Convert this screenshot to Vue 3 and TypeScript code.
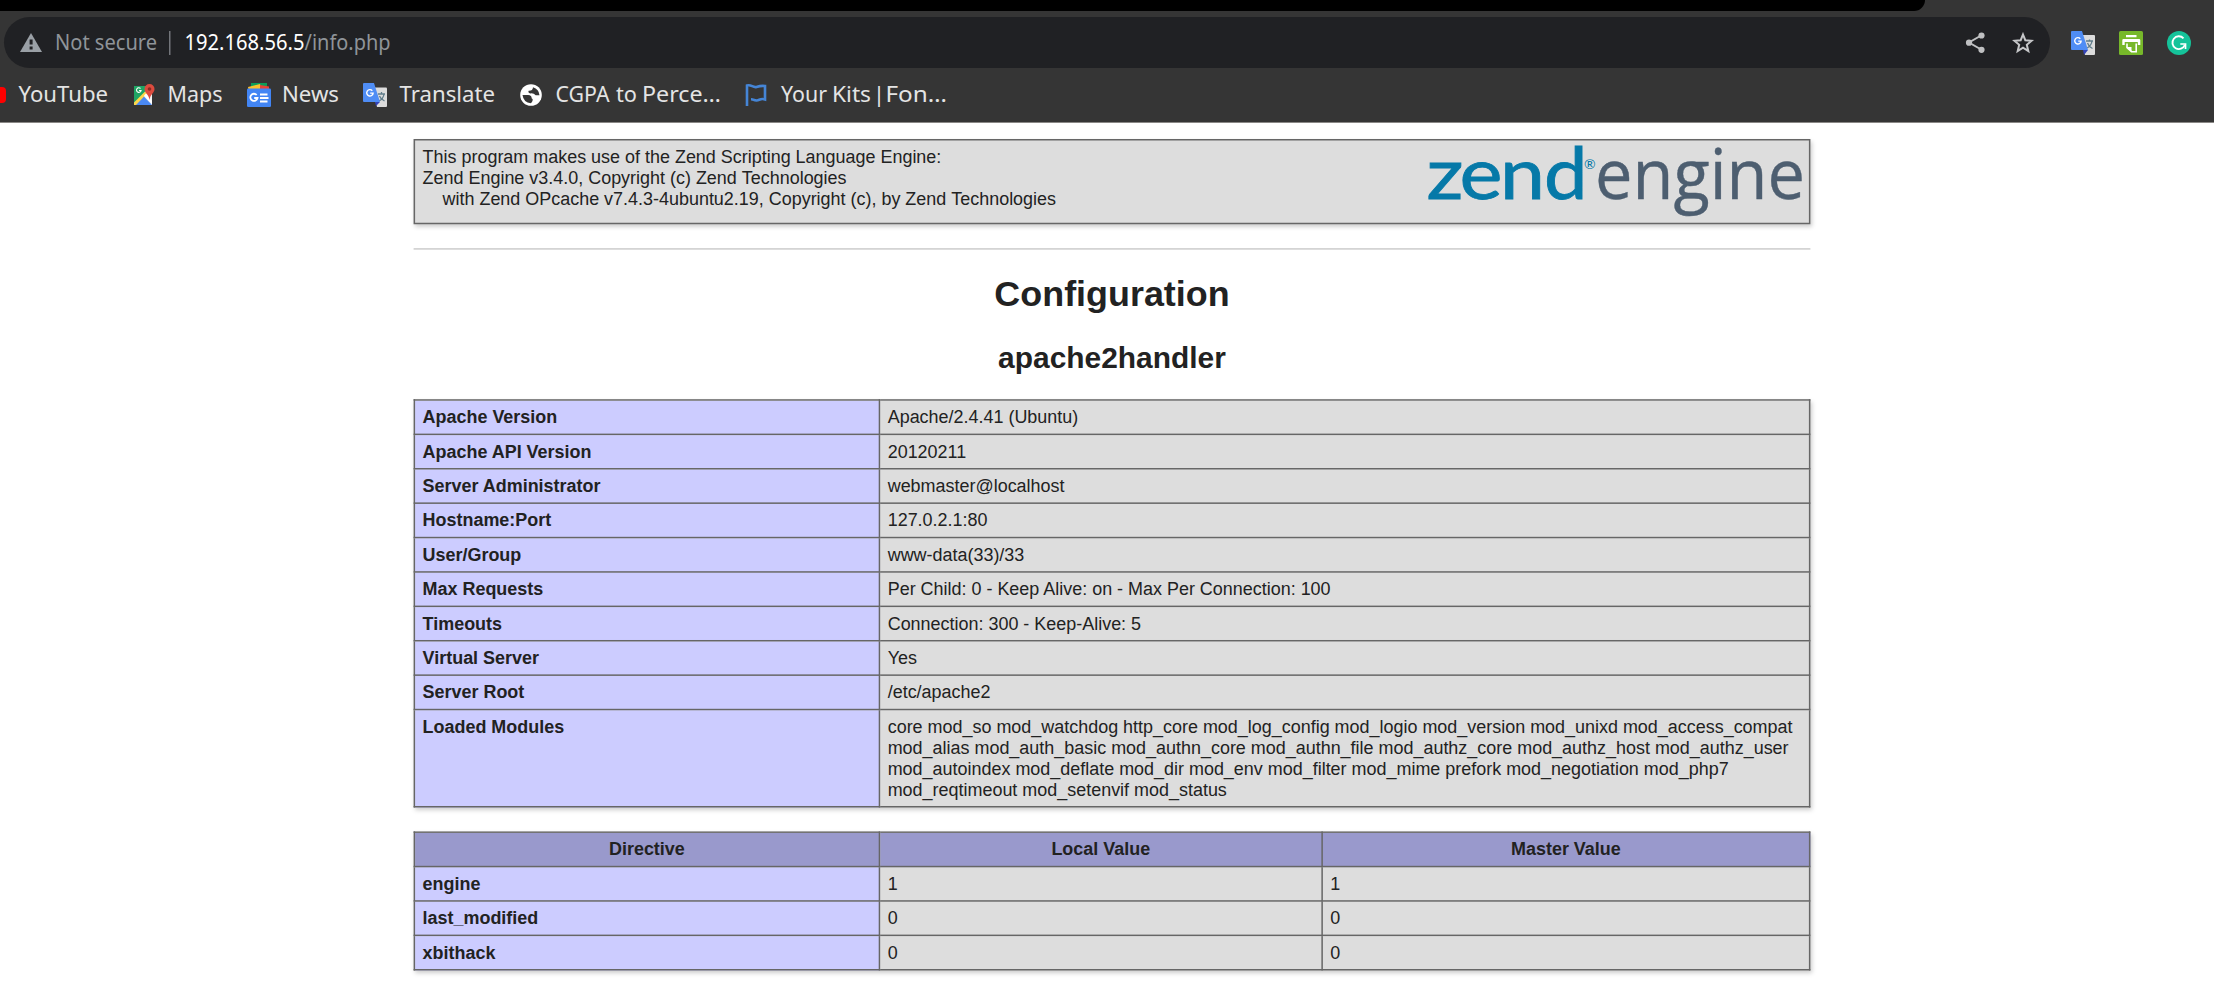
<script setup lang="ts">
interface Word { t: string; x: number; w: number }
interface Bookmark { icon: string; width: number; words: Word[] }

const bookmarks: Bookmark[] = [
  { icon: 'youtube', width: 89.5, words: [{ t: 'YouTube', x: -0.5, w: 89.5 }] },
  { icon: 'maps', width: 54, words: [{ t: 'Maps', x: -1.5, w: 55 }] },
  { icon: 'news', width: 56, words: [{ t: 'News', x: -1, w: 57 }] },
  { icon: 'translate', width: 95.5, words: [{ t: 'Translate', x: -0.5, w: 95.5 }] },
  { icon: 'globe', width: 164, words: [{ t: 'CGPA', x: -0.5, w: 54 }, { t: 'to', x: 60, w: 21 }, { t: 'Perce…', x: 86, w: 79 }] },
  { icon: 'flag', width: 166, words: [{ t: 'Your', x: 1, w: 46 }, { t: 'Kits', x: 52, w: 39 }, { t: '|', x: 93, w: 12 }, { t: 'Fon…', x: 105.5, w: 61.5 }] },
]

const rows: [string, string][] = [
  ['Apache Version', 'Apache/2.4.41 (Ubuntu)'],
  ['Apache API Version', '20120211'],
  ['Server Administrator', 'webmaster@localhost'],
  ['Hostname:Port', '127.0.2.1:80'],
  ['User/Group', 'www-data(33)/33'],
  ['Max Requests', 'Per Child: 0 - Keep Alive: on - Max Per Connection: 100'],
  ['Timeouts', 'Connection: 300 - Keep-Alive: 5'],
  ['Virtual Server', 'Yes'],
  ['Server Root', '/etc/apache2'],
  ['Loaded Modules', 'core mod_so mod_watchdog http_core mod_log_config mod_logio mod_version mod_unixd mod_access_compat mod_alias mod_auth_basic mod_authn_core mod_authn_file mod_authz_core mod_authz_host mod_authz_user mod_autoindex mod_deflate mod_dir mod_env mod_filter mod_mime prefork mod_negotiation mod_php7 mod_reqtimeout mod_setenvif mod_status'],
]

const directives: [string, string, string][] = [
  ['engine', '1', '1'],
  ['last_modified', '0', '0'],
  ['xbithack', '0', '0'],
]
</script>

<template>
  <div class="screen">
    <header class="chrome">
      <div class="tabstrip"></div>
      <div class="toolbar">
        <div class="omnibox">
          <svg class="warn" width="24" height="22" viewBox="0 0 24 22">
            <path d="M12 1 23 20H1Z" fill="#9aa0a6" />
            <path d="M10.600 7.500h3v5h-3zM10.600 14.500h3v3h-3z" fill="#202124" />
          </svg>
          <svg class="address" width="350" height="32">
            <text class="muted" x="-1" y="23" textLength="102" lengthAdjust="spacingAndGlyphs">Not secure</text>
            <rect x="113" y="4" width="1.500" height="24" fill="#72757a" />
            <text class="host" x="128.500" y="23" textLength="120" lengthAdjust="spacingAndGlyphs">192.168.56.5</text>
            <text class="muted" x="248.500" y="23" textLength="86" lengthAdjust="spacingAndGlyphs">/info.php</text>
          </svg>
          <svg class="share" width="22" height="24" viewBox="0 0 22 24">
            <path d="M17 4 4 11.500 17 19" fill="none" stroke="#bfc0c2" stroke-width="2" />
            <circle cx="16.500" cy="4.500" r="3.100" fill="#bfc0c2" /><circle cx="4" cy="11.700" r="3.100" fill="#bfc0c2" /><circle cx="16.500" cy="18.800" r="3.100" fill="#bfc0c2" />
          </svg>
          <svg class="star" width="22" height="22" viewBox="0 0 22 22">
            <path d="m11 2.500 2.300 5.700 6.300.5-4.800 4.100 1.500 6.200L11 15.600 5.700 19l1.500-6.200-4.800-4.100 6.300-.5Z" fill="none" stroke="#c6c7c9" stroke-width="2" />
          </svg>
        </div>
        <svg class="ext" width="24" height="24" viewBox="0 0 24 24">
          <path d="M9 4h14a1 1 0 0 1 1 1v18a1 1 0 0 1-1 1h-9Z" fill="#dcdcdc" />
          <path d="M15 10h7M18.500 8.500V10M21 10c-.5 4-3 6-5 7M16.500 12c1 3 3 4.500 5 5.500" fill="none" stroke="#607d8b" stroke-width="1.300" />
          <path d="M12 19h5l-4 5Z" fill="#3444b8" />
          <path d="M1 0h10l6 19H1a1 1 0 0 1-1-1V1a1 1 0 0 1 1-1Z" fill="#4f8df5" />
          <path d="M9.300 7.700a3.200 3.200 0 1 0 .8 2.400H7.200" fill="none" stroke="#fff" stroke-width="1.400" />
        </svg>
        <svg class="ext" width="24" height="24" viewBox="0 0 24 24">
          <rect width="24" height="24" rx="1.500" fill="#77b82a" />
          <path d="M7 4h10.500v2.200H7zM4.500 8h15.500q1.300 0 1.300 1.300V14h-2.500v-3H5.700v3H3.300V9.300Q3.300 8 4.500 8Z" fill="#fff" />
          <path d="M8 12.500v4.200l4.500 4h4.700v-8.200" fill="none" stroke="#fff" stroke-width="1.600" />
          <path d="M7.500 16h5v4.700Z" fill="#fff" />
        </svg>
        <svg class="ext" width="24" height="24" viewBox="0 0 24 24">
          <circle cx="12" cy="12" r="12" fill="#15c39a" />
          <path d="M16.500 7.300A6.400 6.400 0 1 0 17.800 14" fill="none" stroke="#fff" stroke-width="1.900" />
          <path d="M13.300 13h5.200v5" fill="none" stroke="#fff" stroke-width="1.700" />
        </svg>
      </div>
      <nav class="bookmarks">
        <div v-for="b in bookmarks" :key="b.icon" class="bookmark">
          <svg v-if="b.icon === 'youtube'" width="6" height="24" viewBox="0 0 6 24"><rect x="-20" y="4" width="26" height="16" rx="4" fill="#f00" /></svg>
          <svg v-else-if="b.icon === 'maps'" width="24" height="24" viewBox="0 0 24 24">
            <path d="M2 3h18v19H2Z" fill="#f1f1f1" />
            <path d="M2 3h14L12 12 2 20Z" fill="#1fa463" />
            <path d="M2 22 11 12.500 20 22Z" fill="#4a89f3" />
            <path d="M2 19.500 13 8.500l2 2L4 22H2Z" fill="#fdd64b" />
            <path d="m12 12.500 2-2L20 18v3Z" fill="#fff" />
            <path d="M8.500 5.500a2.300 2.300 0 1 0 .6 2H7" fill="none" stroke="#fff" stroke-width="1.100" />
            <path d="M17.500 1a5 5 0 0 0-5 5c0 4 4.300 5 5 11 .7-6 5-7 5-11a5 5 0 0 0-5-5Z" fill="#dc4b3e" /><circle cx="17.500" cy="6" r="1.800" fill="#8a2a22" />
          </svg>
          <svg v-else-if="b.icon === 'news'" width="24" height="24" viewBox="0 0 24 24">
            <path d="M4 0h16v8H4Z" fill="#0c9d58" /><path d="m1 4 12-3 2 8H2Z" fill="#fbc02d" /><path d="m13 2 9 1.500V9h-9Z" fill="#ea4335" />
            <rect y="5.500" width="24" height="18.500" rx="1.300" fill="#4285f4" />
            <path d="M9.700 12A3.600 3.600 0 1 0 10.500 15H7.200M13 11.500h7.500M13 15h8.500M13 18.500h7.500" fill="none" stroke="#fff" stroke-width="1.800" />
          </svg>
          <svg v-else-if="b.icon === 'translate'" width="24" height="24" viewBox="0 0 24 24">
            <path d="M9 4.500h14a1 1 0 0 1 1 1V23a1 1 0 0 1-1 1h-9Z" fill="#dcdcdc" />
            <path d="M15 11h7M18.500 9v2M21 11c-.5 4-3 6-5 7M16.500 13c1 3 3 4 5 5" fill="none" stroke="#607d8b" stroke-width="1.300" />
            <path d="M12 19h5l-4 4Z" fill="#3444b8" /><path d="M1 0h10l6 19H1a1 1 0 0 1-1-1V1a1 1 0 0 1 1-1Z" fill="#4f8df5" />
            <path d="M9.300 7.700a3.200 3.200 0 1 0 .8 2.400H7.200" fill="none" stroke="#fff" stroke-width="1.400" />
          </svg>
          <svg v-else-if="b.icon === 'globe'" width="24" height="24" viewBox="0 0 24 24">
            <circle cx="12" cy="12" r="10.800" fill="#fff" />
            <path d="M3.500 12h5.500q4 .3 3.600 3.200 2.600 1.200-.6 5Q4.500 19.800 3.500 12Z" fill="#353535" />
            <path d="M14 4.300Q20 6.200 20.500 12.300h-3.800Q14.500 9.800 11.300 10.400 8.800 10 9.600 7.800 13.800 8 14 4.300Z" fill="#353535" />
          </svg>
          <svg v-else width="24" height="24" viewBox="0 0 24 24">
            <path d="M3 23V2.500c4-1.500 6 2.500 9.500 1.500 3-1 5-1.500 8.500-1v13.500c-5-1.800-6 1.800-9.500.8-1.800-.5-2.800-1-4.500-1" fill="none" stroke="#4585d6" stroke-width="2.600" />
          </svg>
          <svg class="label" :width="b.width" height="30">
            <text v-for="w in b.words" :key="w.t" :x="w.x" y="22.300" :textLength="w.w" lengthAdjust="spacingAndGlyphs">{{ w.t }}</text>
          </svg>
        </div>
      </nav>
    </header>

    <main class="page">
      <div class="info">
        <section class="engine-box">
          <p>This program makes use of the Zend Scripting Language Engine:<br>Zend&nbsp;Engine&nbsp;v3.4.0,&nbsp;Copyright&nbsp;(c)&nbsp;Zend&nbsp;Technologies<br>&nbsp;&nbsp;&nbsp;&nbsp;with&nbsp;Zend&nbsp;OPcache&nbsp;v7.4.3-4ubuntu2.19,&nbsp;Copyright&nbsp;(c),&nbsp;by&nbsp;Zend&nbsp;Technologies</p>
          <svg class="zend" viewBox="1423 142 382 80" width="255.400" height="53.500">
            <text class="zend-word" y="199.500"><tspan x="1426.500" textLength="37" lengthAdjust="spacingAndGlyphs">z</tspan><tspan x="1459.500" textLength="43" lengthAdjust="spacingAndGlyphs">e</tspan><tspan x="1500" textLength="45" lengthAdjust="spacingAndGlyphs">n</tspan><tspan x="1544" textLength="43.500" lengthAdjust="spacingAndGlyphs">d</tspan></text>
            <text class="zend-mark" x="1584" y="169.500">®</text>
            <text class="engine-word" x="1595" y="199.500" textLength="210" lengthAdjust="spacingAndGlyphs">engine</text>
          </svg>
        </section>
        <hr>
        <h1>Configuration</h1>
        <h2>apache2handler</h2>
        <table>
          <tbody>
            <tr v-for="[k, v] in rows" :key="k"><td class="e">{{ k }}</td><td class="v">{{ v }}</td></tr>
          </tbody>
        </table>
        <table class="directives">
          <colgroup><col class="c1"><col class="c2"><col></colgroup>
          <thead><tr><th>Directive</th><th>Local Value</th><th>Master Value</th></tr></thead>
          <tbody>
            <tr v-for="[k, l, m] in directives" :key="k"><td class="e">{{ k }}</td><td class="v">{{ l }}</td><td class="v">{{ m }}</td></tr>
          </tbody>
        </table>
      </div>
    </main>
  </div>
</template>

<style>
body { margin: 0; background: #fff; }
</style>

<style scoped>
.screen { width: 2214px; height: 986px; overflow: hidden; background: #fff; color: #222; font-family: "Liberation Sans", Arial, sans-serif; }
.chrome { height: 122px; background: #353535; border-bottom: 1px solid #8a8886; box-sizing: content-box; font-family: "Noto Sans", "Open Sans", sans-serif; }
.tabstrip { width: 1925px; height: 11px; background: #000; border-radius: 0 0 12px 0; }
.toolbar { display: flex; align-items: center; height: 51px; margin-top: 6px; padding-left: 4px; }
.omnibox { display: flex; align-items: center; box-sizing: border-box; width: 2046px; height: 51px; padding: 0 16px 0 15px; border-radius: 26px; background: #202124; }
.address { margin-left: 13px; overflow: visible; }
.address text { font-size: 21px; }
.muted { fill: #8f9499; }
.host { fill: #fff; }
.share { margin-left: auto; margin-right: 25px; }
.ext { margin-left: 24px; }
.omnibox + .ext { margin-left: 21px; }
.bookmarks { display: flex; align-items: center; height: 54px; }
.bookmark { display: flex; align-items: center; margin-right: 24px; }
.bookmark .label { margin-left: 12.500px; overflow: visible; }
.bookmark text { font-size: 21.500px; fill: #e4e4e4; }

.page { display: flex; justify-content: center; }
.info { width: 934px; margin-left: 10px; margin-top: 16px; transform: scale(1.4955); transform-origin: 50% 0; }
.engine-box { display: flex; justify-content: space-between; box-sizing: border-box; height: 57px; margin-bottom: 16px; padding: 4px 5px; border: 1px solid #666; background: #ddd; box-shadow: 1px 2px 3px #ccc; }
.engine-box p { margin: 0; font-size: 12px; line-height: 14px; }
.zend { margin: -3px -2px 0 0; overflow: visible; }
.zend-word { font-family: Lato, sans-serif; font-size: 71.500px; fill: #0679a8; stroke: #0679a8; stroke-width: .8px; }
.zend-mark { font-family: Lato, sans-serif; font-size: 14px; fill: #0679a8; }
.engine-word { font-family: "Open Sans", sans-serif; font-size: 69px; fill: #4d5e70; stroke: #4d5e70; stroke-width: .4px; }
hr { height: 1px; margin: 0; border: 0; background: #ccc; }
h1 { margin: 16px 0 16.600px; font-size: 24px; line-height: 28px; text-align: center; }
h2 { margin: 0 0 16.600px; font-size: 20px; line-height: 23px; text-align: center; }
table { width: 934px; margin: 0 0 16px; border-collapse: collapse; table-layout: fixed; box-shadow: 1px 2px 3px #ccc; }
td, th { padding: 4px 5px; border: 1px solid #666; font-size: 12px; line-height: 14px; vertical-align: baseline; }
td { overflow-wrap: break-word; }
th { background: #99c; text-align: center; }
.e { width: 300px; background: #ccf; font-weight: bold; }
.v { background: #ddd; }
.c1 { width: 311px; }
.c2 { width: 296px; }
</style>
